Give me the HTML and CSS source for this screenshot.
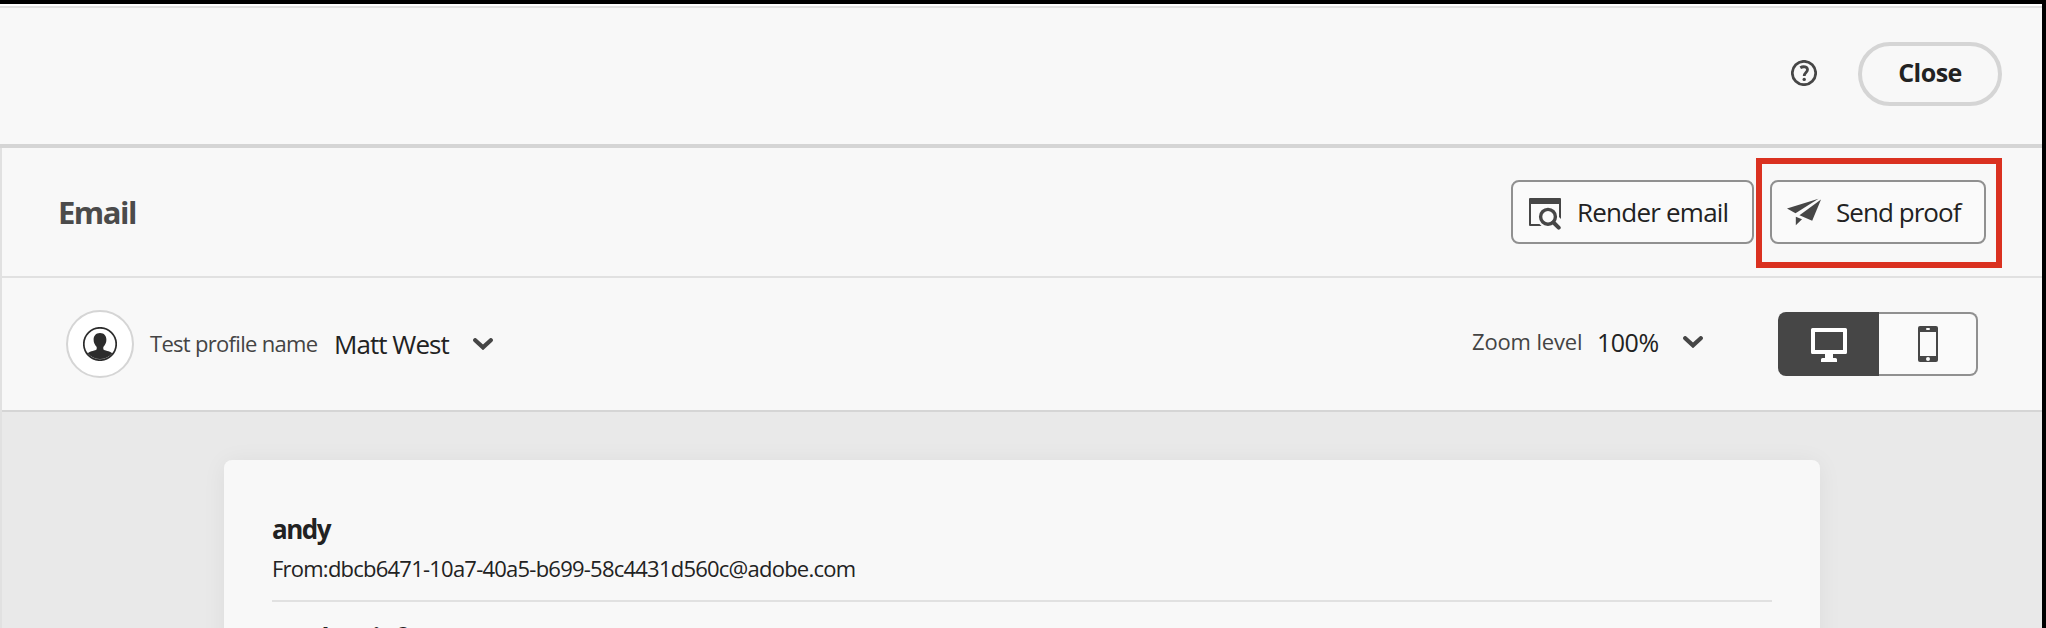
FILE: index.html
```html
<!DOCTYPE html>
<html lang="en">
<head>
<meta charset="utf-8">
<title>Email preview</title>
<link rel="stylesheet" href="styles.css">
</head>
<body>
<div class="app">
  <header class="topbar">
    <svg class="help" viewBox="0 0 26 26" width="26" height="26">
      <circle cx="13" cy="13" r="11.700" fill="none" stroke="#464646" stroke-width="2.700"/>
      <path d="M9.300 7.800C12.4 5.900 16.500 6.800 16.500 9.700C16.500 12.300 13.200 12.700 13.200 16" fill="none" stroke="#464646" stroke-width="2.800"/>
      <circle cx="13.200" cy="19.400" r="1.700" fill="#464646"/>
    </svg>
    <button class="close"><span>Close</span></button>
  </header>
  <div class="workspace">
    <section class="titlebar">
      <h1 class="title">Email</h1>
      <div class="actions">
        <button class="action render">
          <svg class="render-icon" viewBox="0 0 32 32" width="32" height="32">
            <path d="M0 1a1 1 0 0 1 1-1h30a1 1 0 0 1 1 1v20l-2-2V6H2v20h8.500l2 2H1a1 1 0 0 1-1-1z" fill="#464646"/>
            <circle cx="19" cy="18.800" r="7.400" fill="none" stroke="#464646" stroke-width="3.400"/>
            <path d="M24.500 24.500L29.700 29.700" stroke="#464646" stroke-width="4" stroke-linecap="round"/>
          </svg>
          <span>Render email</span>
        </button>
        <div class="highlighted">
          <button class="action send">
            <svg viewBox="0 0 34 28" width="34" height="28">
              <path d="M31.500 .8L0 10.500l8.500 4.800z" fill="#464646"/>
              <path d="M34 1.500L12.500 17.300L25.200 22.800z" fill="#464646"/>
              <path d="M8.800 18.800L15 21.300L8.800 27.300z" fill="#464646"/>
            </svg>
            <span>Send proof</span>
          </button>
          <div class="marker"></div>
        </div>
      </div>
    </section>
    <section class="toolbar">
      <div class="profile">
        <div class="avatar">
          <svg viewBox="0 0 34 34" width="34" height="34">
            <circle cx="17" cy="17" r="16.200" fill="none" stroke="#2c2c2c" stroke-width="1.700"/>
            <path d="M17 6c4.200 0 6.400 2.900 6.400 6.700c0 3.100-1.400 5.400-3.100 7.300v2.300c1 1.700 6.300 1.500 9 4A16 16 0 0 1 4.700 26.300c2.700-2.500 8-2.300 9-4V20c-1.700-1.900-3.100-4.200-3.100-7.300C10.600 8.900 12.800 6 17 6z" fill="#2c2c2c"/>
          </svg>
        </div>
        <span class="label profile-label">Test profile name</span>
        <span class="value profile-value">Matt West</span>
        <svg class="chevron" viewBox="0 0 20 12" width="20" height="12"><path d="M2.200 2.200L10 9.400L17.800 2.200" fill="none" stroke="#464646" stroke-width="4.200" stroke-linecap="round"/></svg>
      </div>
      <div class="view">
        <div class="zoom">
          <span class="label zoom-label">Zoom level</span>
          <span class="value zoom-value">100%</span>
          <svg class="chevron" viewBox="0 0 20 12" width="20" height="12"><path d="M2.200 2.200L10 9.400L17.800 2.200" fill="none" stroke="#464646" stroke-width="4.200" stroke-linecap="round"/></svg>
        </div>
        <div class="devices">
          <button class="device desktop">
            <svg viewBox="0 0 36 34" width="36" height="34">
              <path fill-rule="evenodd" d="M1.500 0h33A1.500 1.500 0 0 1 36 1.500v23a1.500 1.500 0 0 1-1.500 1.500H22v4h2.500a1.500 1.500 0 0 1 1.500 1.500V34H10v-2.500a1.500 1.500 0 0 1 1.500-1.500H14v-4H1.500A1.500 1.500 0 0 1 0 24.500v-23A1.500 1.500 0 0 1 1.500 0zM4 4v18h28V4z" fill="#fff"/>
            </svg>
          </button>
          <button class="device phone">
            <svg viewBox="0 0 20 36" width="20" height="36">
              <rect width="20" height="36" rx="2" fill="#464646"/>
              <rect x="2" y="6" width="16" height="24" fill="#fafafa"/>
              <rect x="8" y="2" width="4" height="2" rx="1" fill="#fafafa"/>
              <circle cx="10" cy="33" r="2" fill="#fafafa"/>
            </svg>
          </button>
        </div>
      </div>
    </section>
    <main class="canvas">
      <article class="card">
        <div class="sender">
          <div class="name">andy</div>
          <div class="from">From:dbcb6471-10a7-40a5-b699-58c4431d560c@adobe.com</div>
        </div>
        <div class="subject">Product info</div>
      </article>
    </main>
  </div>
</div>
</body>
</html>
```
FILE: styles.css
```css
* { box-sizing: border-box; }

body {
  margin: 0;
  height: 628px;
  overflow: hidden;
  background: #000;
  padding: 4px 4px 0 0;
  font-family: "Open Sans", "Noto Sans", sans-serif;
  color: #222;
}

.app {
  height: 624px;
  display: flex;
  flex-direction: column;
  background: #f8f8f8;
  border-top: 2px solid #fff;
  overflow: hidden;
}

button {
  font: inherit;
  color: inherit;
  margin: 0;
  padding: 0;
  display: flex;
  align-items: center;
}

svg { display: block; flex: none; }
span { white-space: nowrap; }

.topbar {
  flex: none;
  height: 142px;
  display: flex;
  align-items: center;
  justify-content: flex-end;
  gap: 41px;
  padding: 0 40px 4px 0;
  border-top: 2px solid #e1e1e1;
  border-bottom: 4px solid #d5d5d5;
}

.help { margin-bottom: 2px; }

.close {
  width: 144px;
  height: 64px;
  justify-content: center;
  padding-bottom: 4px;
  border: 4px solid #d5d5d5;
  border-radius: 32px;
  background: #f8f8f8;
  font-size: 25px;
  font-weight: 700;
  letter-spacing: -0.5px;
}

.workspace {
  flex: 1;
  min-height: 0;
  display: flex;
  flex-direction: column;
  border-left: 2px solid #e1e1e1;
}

.titlebar {
  flex: none;
  height: 130px;
  display: flex;
  align-items: center;
  justify-content: space-between;
  padding: 0 56px;
  border-bottom: 2px solid #e1e1e1;
}

.title {
  margin: 0;
  font-size: 31px;
  font-weight: 700;
  letter-spacing: -1.5px;
  color: #4b4b4b;
}

.actions { display: flex; gap: 16px; }

.action {
  height: 64px;
  gap: 16px;
  border: 2px solid #909090;
  border-radius: 8px;
  background: #fafafa;
  font-size: 26px;
  letter-spacing: -0.78px;
}

.render { width: 243px; padding-left: 16px; }
.render-icon { margin-top: 4px; }
.send { width: 216px; padding-left: 15px; gap: 15px; letter-spacing: -0.95px; }

.highlighted { position: relative; }

.marker {
  position: absolute;
  inset: -22px -16px -24px -14px;
  border: 6px solid #da3120;
}

.toolbar {
  flex: none;
  height: 134px;
  display: flex;
  align-items: center;
  justify-content: space-between;
  padding: 0 64px;
  border-bottom: 2px solid #d5d5d5;
}

.profile, .view, .zoom { display: flex; align-items: center; }

.avatar {
  width: 68px;
  height: 68px;
  display: flex;
  align-items: center;
  justify-content: center;
  border: 2px solid #d5d5d5;
  border-radius: 50%;
  background: #fff;
}

.label { font-size: 22px; color: #444; padding-bottom: 2px; }
.value { font-size: 26px; }

.profile-label { margin-left: 16px; width: 184px; letter-spacing: -0.7px; }
.profile-value { width: 139px; letter-spacing: -0.95px; }

.zoom { padding-bottom: 4px; margin-right: 75px; }
.zoom-label { width: 125px; margin-left: 1px; letter-spacing: -0.15px; }
.zoom-value { width: 86px; font-size: 25px; letter-spacing: -0.5px; }

.devices { display: flex; }

.device { height: 64px; justify-content: center; }

.desktop {
  width: 101px;
  padding-left: 1px;
  padding-top: 2px;
  border: 0;
  border-radius: 8px 0 0 8px;
  background: #464646;
}

.phone {
  width: 99px;
  border: 2px solid #909090;
  border-left: 0;
  border-radius: 0 8px 8px 0;
  background: #fafafa;
}

.canvas {
  flex: 1;
  min-height: 0;
  padding: 48px 222px 0;
  background: #e9e9e9;
  overflow: hidden;
}

.card {
  height: 400px;
  padding: 51px 48px 0;
  border-radius: 8px;
  background: #f8f8f8;
  box-shadow: 0 2px 24px rgba(0, 0, 0, 0.06);
}

.sender {
  height: 91px;
  border-bottom: 2px solid #e1e1e1;
}

.name {
  margin-bottom: 5px;
  font-size: 26px;
  font-weight: 700;
  line-height: 36px;
  letter-spacing: -1.5px;
}

.from {
  font-size: 22px;
  line-height: 32px;
  letter-spacing: -0.77px;
  white-space: nowrap;
}

.subject {
  margin-top: 18px;
  font-size: 26px;
  font-weight: 700;
  line-height: 36px;
  letter-spacing: -1.1px;
}
```
